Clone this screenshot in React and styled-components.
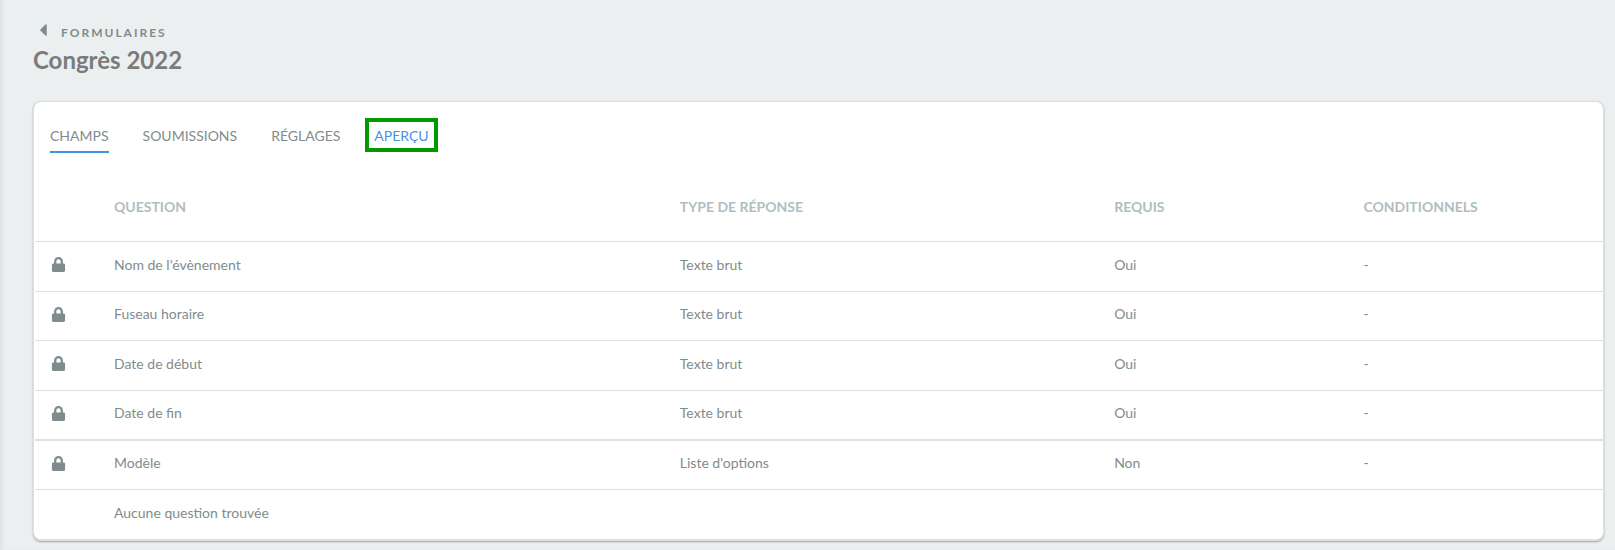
import React, { useState } from 'react';
import styled, { createGlobalStyle } from 'styled-components';
import { FaLock, FaCaretLeft } from 'react-icons/fa';

const GlobalStyle = createGlobalStyle`
    body {
        margin: 0;
        background-color: #ebeff0;
        color: #7f8c8d;
        font-family: Lato, "Liberation Sans", sans-serif;
        font-size: 14px;
        line-height: 20px;
    }
`

const Page = styled.main`
    min-height: 100vh;
    box-sizing: border-box;
    padding: 23px 11px 8px 33px;
    box-shadow: inset 4px 0 4px -2px #00000010;
`

const BackLink = styled.a`
    display: flex;
    align-items: center;
    gap: 8px;
    color: #7f8c8d;
    font-size: 12px;
    font-weight: 700;
    letter-spacing: 2px;
    text-transform: uppercase;
    text-decoration: none;

    svg {
        margin: -3px 0 3px;
    }
`

const Title = styled.h1`
    margin: 2px 0 27px;
    color: #7b7b7b;
    font-size: 24px;
    line-height: 29px;
    font-weight: 700;
`

const Card = styled.section`
    background-color: #fff;
    border: 1px solid #dce0e1;
    border-bottom-width: 2px;
    border-radius: 8px;
    box-shadow: 0 1px 2px #00000050;
    overflow: hidden;
`

const Tabs = styled.nav`
    display: flex;
    align-items: flex-start;
    gap: 34px;
    padding: 16px 16px 20px;
`

const Tab = styled.button`
    box-sizing: border-box;
    height: 35px;
    padding: 8px 0 5px;
    border: 0;
    border-bottom: 2px solid ${(props) => (props.$active ? '#4a90e2' : 'transparent')};
    background: none;
    color: #7f8c8d;
    font: inherit;
    text-transform: uppercase;
    cursor: pointer;
`

const PreviewLink = styled.a`
    box-sizing: border-box;
    height: 34px;
    margin-left: -9px;
    padding: 4px 5px;
    border: 4px solid #009a00;
    color: #4a90e2;
    text-transform: uppercase;
    text-decoration: none;
`

const TableWrapper = styled.div`
    padding-left: 1px;
`

const Table = styled.table`
    width: 100%;
    table-layout: fixed;
    border-collapse: separate;
    border-spacing: 0;
    text-align: left;
`

const Col = styled.col`
    width: ${(props) => props.$width};
`

const HeadCell = styled.th`
    box-sizing: border-box;
    height: 68px;
    padding: 0 16px;
    color: #b0bec1;
    font-weight: 700;
    text-transform: uppercase;
`

const Cell = styled.td`
    box-sizing: border-box;
    height: 50px;
    padding: 0 16px 4px;
    border-top: 1px solid #dce0e1;

    svg {
        display: block;
    }
`

const Row = styled.tr`
    &:nth-child(2) ${Cell}, &:nth-child(5) ${Cell} {
        height: 49px;
    }

    &:nth-child(4) ${Cell} {
        border-bottom: 1px solid #dce0e1;
    }
`

const tabs = ['Champs', 'Soumissions', 'Réglages'];

const questions = [
    { label: "Nom de l'évènement", type: 'Texte brut', required: true },
    { label: 'Fuseau horaire', type: 'Texte brut', required: true },
    { label: 'Date de début', type: 'Texte brut', required: true },
    { label: 'Date de fin', type: 'Texte brut', required: true },
    { label: 'Modèle', type: "Liste d'options", required: false },
];

function QuestionRow(props){
    return (
        <Row>
            <Cell><FaLock size={15} aria-hidden="true" /></Cell>
            <Cell>{props.label}</Cell>
            <Cell>{props.type}</Cell>
            <Cell>{props.required ? 'Oui' : 'Non'}</Cell>
            <Cell>-</Cell>
        </Row>
    );
}

function App(){
    const [active, setActive] = useState('Champs');

    return (
        <Page>
            <GlobalStyle />
            <BackLink href="#formulaires"><FaCaretLeft size={20} aria-hidden="true" />Formulaires</BackLink>
            <Title>Congrès 2022</Title>
            <Card>
                <Tabs>
                    {tabs.map((tab) => (
                        <Tab key={tab} type="button" $active={tab === active} onClick={() => setActive(tab)}>{tab}</Tab>
                    ))}
                    <PreviewLink href="#apercu">Aperçu</PreviewLink>
                </Tabs>
                <TableWrapper>
                    <Table>
                        <colgroup>
                            <Col $width="63px" />
                            <Col />
                            <Col $width="27.7%" />
                            <Col $width="15.9%" />
                            <Col $width="16.3%" />
                        </colgroup>
                        <thead>
                            <tr>
                                <HeadCell as="td" />
                                <HeadCell scope="col">Question</HeadCell>
                                <HeadCell scope="col">Type de réponse</HeadCell>
                                <HeadCell scope="col">Requis</HeadCell>
                                <HeadCell scope="col">Conditionnels</HeadCell>
                            </tr>
                        </thead>
                        <tbody>
                            {questions.map((question) => <QuestionRow key={question.label} {...question} />)}
                            <Row>
                                <Cell />
                                <Cell colSpan={4}>Aucune question trouvée</Cell>
                            </Row>
                        </tbody>
                    </Table>
                </TableWrapper>
            </Card>
        </Page>
    );
}

export default App;
